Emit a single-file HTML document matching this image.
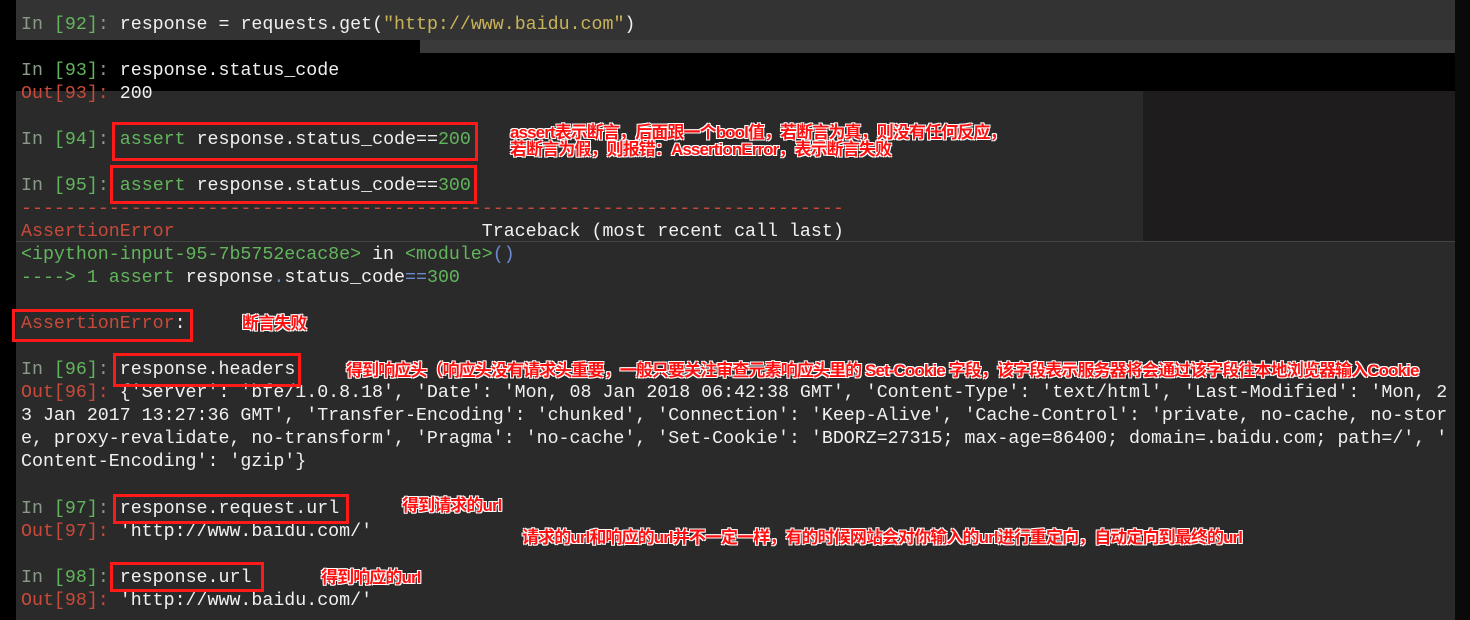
<!DOCTYPE html>
<html><head><meta charset="utf-8"><style>
html,body{margin:0;padding:0;}
body{width:1470px;height:620px;position:relative;overflow:hidden;background:#2a2a2a;font-family:"Liberation Mono","DejaVu Sans Mono",monospace;}
.l{position:absolute;left:21px;font-size:18.3px;line-height:23px;color:#f0f0f0;white-space:pre;}
.g{color:#62b55c}.gi{color:#8a9a88}.r{color:#c94a3a}.y{color:#c9b35a}.b{color:#6a8ad0}
.box{position:absolute;border:3px solid #ff1a1a;box-sizing:border-box;}
.a{position:absolute;font-family:"Liberation Sans","Noto Sans CJK SC",sans-serif;font-weight:bold;font-size:17px;line-height:17px;color:#ff1010;white-space:pre;letter-spacing:-0.9px;
text-shadow:1px 1px 0 #fff,-1px -1px 0 #fff,1px -1px 0 #fff,-1px 1px 0 #fff;}
</style></head><body>
<div style="position:absolute;left:0;top:0;width:1470px;height:40px;background:#333;"></div>
<div style="position:absolute;left:420px;top:40px;width:1050px;height:13px;background:#3a3a3a;"></div>
<div style="position:absolute;left:0;top:40px;width:420px;height:13px;background:#000;"></div>
<div style="position:absolute;left:0;top:53px;width:1470px;height:38px;background:#000;"></div>
<div style="position:absolute;left:1143px;top:91px;width:312px;height:150px;background:#1e1c1c;"></div>
<div style="position:absolute;left:0;top:241px;width:1470px;height:1px;background:#444;"></div>
<div style="position:absolute;left:0;top:0;width:16px;height:620px;background:#000;"></div>
<div style="position:absolute;left:1455px;top:0;width:15px;height:620px;background:#0a0a0a;"></div>

<div class="l" style="top:14px"><span class="gi">In </span><span class="g">[92]</span><span class="gi">:</span> response = requests.get(<span class="y">"http://www.baidu.com"</span>)</div>
<div class="l" style="top:60px"><span class="gi">In </span><span class="g">[93]</span><span class="gi">:</span> response.status_code</div>
<div class="l" style="top:83px"><span class="r">Out[93]:</span> 200</div>
<div class="l" style="top:129px"><span class="gi">In </span><span class="g">[94]</span><span class="gi">:</span> <span class="g">assert</span> response.status_code==<span class="g">200</span></div>
<div class="l" style="top:175px"><span class="gi">In </span><span class="g">[95]</span><span class="gi">:</span> <span class="g">assert</span> response.status_code==<span class="g">300</span></div>
<div class="l r" style="top:198px">---------------------------------------------------------------------------</div>
<div class="l" style="top:221px"><span class="r">AssertionError</span>                            Traceback (most recent call last)</div>
<div class="l" style="top:244px"><span class="g">&lt;ipython-input-95-7b5752ecac8e&gt;</span> in <span class="g">&lt;module&gt;</span><span class="b">()</span></div>
<div class="l" style="top:267px"><span class="g">----&gt; 1 assert</span> response<span class="b">.</span>status_code<span class="b">==</span><span class="g">300</span></div>
<div class="l" style="top:313px"><span class="r">AssertionError</span>:</div>
<div class="l" style="top:359px"><span class="gi">In </span><span class="g">[96]</span><span class="gi">:</span> response.headers</div>
<div class="l" style="top:382px"><span class="r">Out[96]:</span> {'Server': 'bfe/1.0.8.18', 'Date': 'Mon, 08 Jan 2018 06:42:38 GMT', 'Content-Type': 'text/html', 'Last-Modified': 'Mon, 2</div>
<div class="l" style="top:405px">3 Jan 2017 13:27:36 GMT', 'Transfer-Encoding': 'chunked', 'Connection': 'Keep-Alive', 'Cache-Control': 'private, no-cache, no-stor</div>
<div class="l" style="top:428px">e, proxy-revalidate, no-transform', 'Pragma': 'no-cache', 'Set-Cookie': 'BDORZ=27315; max-age=86400; domain=.baidu.com; path=/', '</div>
<div class="l" style="top:451px">Content-Encoding': 'gzip'}</div>
<div class="l" style="top:498px"><span class="gi">In </span><span class="g">[97]</span><span class="gi">:</span> response.request.url</div>
<div class="l" style="top:521px"><span class="r">Out[97]:</span> 'http://www.baidu.com/'</div>
<div class="l" style="top:567px"><span class="gi">In </span><span class="g">[98]</span><span class="gi">:</span> response.url</div>
<div class="l" style="top:590px"><span class="r">Out[98]:</span> 'http://www.baidu.com/'</div>

<div class="box" style="left:112px;top:122px;width:366px;height:39px"></div>
<div class="box" style="left:110px;top:165px;width:367px;height:39px"></div>
<div class="box" style="left:12px;top:309px;width:181px;height:33px"></div>
<div class="box" style="left:113px;top:353px;width:188px;height:34px"></div>
<div class="box" style="left:113px;top:494px;width:236px;height:30px"></div>
<div class="box" style="left:110px;top:562px;width:154px;height:30px"></div>

<div class="a" style="left:510px;top:124px">assert表示断言，后面跟一个bool值，若断言为真，则没有任何反应，</div>
<div class="a" style="left:510px;top:141px">若断言为假，则报错：AssertionError，表示断言失败</div>
<div class="a" style="left:242px;top:315px">断言失败</div>
<div class="a" style="left:346px;top:362px">得到响应头（响应头没有请求头重要，一般只要关注审查元素响应头里的 Set-Cookie 字段，该字段表示服务器将会通过该字段往本地浏览器输入Cookie</div>
<div class="a" style="left:402px;top:497px">得到请求的url</div>
<div class="a" style="left:522px;top:529px">请求的url和响应的url并不一定一样，有的时候网站会对你输入的url进行重定向，自动定向到最终的url</div>
<div class="a" style="left:321px;top:569px">得到响应的url</div>
</body></html>
